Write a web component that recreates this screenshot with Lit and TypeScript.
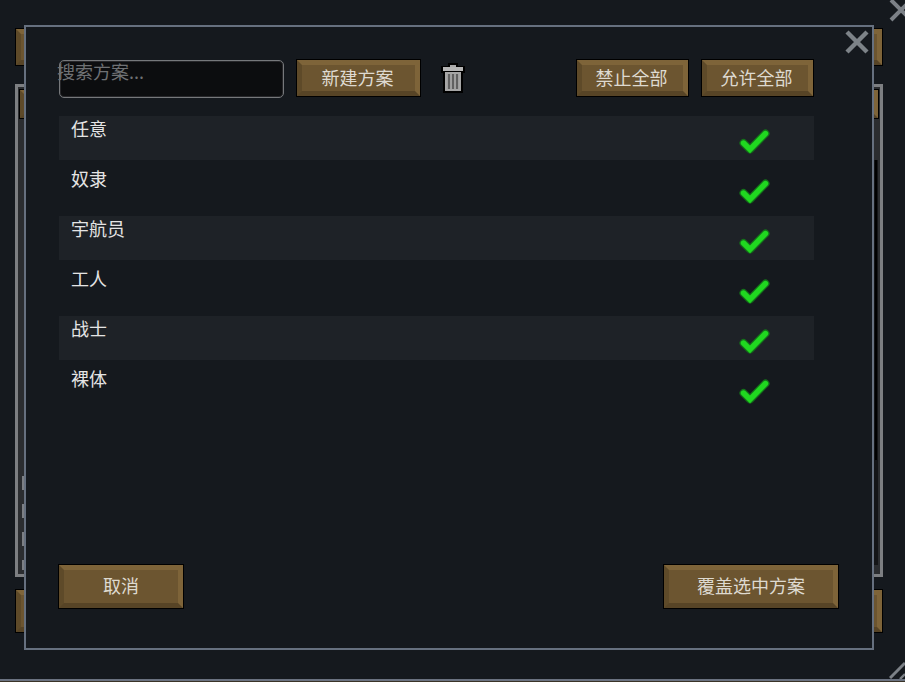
import { LitElement, html, css, svg } from "lit";
import { customElement } from "lit/decorators.js";

const check = svg`<svg class="check" viewBox="0 0 32 28" width="32" height="28"><path d="M4.5 16 L11 22.5 L26.5 6.5" fill="none" stroke="#14701a" stroke-width="8" stroke-linecap="round" stroke-linejoin="round"/><path d="M4.5 16 L11 22.5 L26.5 6.5" fill="none" stroke="#20d820" stroke-width="5.4" stroke-linecap="round" stroke-linejoin="miter"/></svg>`;

const rows = ["任意", "奴隶", "宇航员", "工人", "战士", "裸体"];

@customElement("app-root")
export class AppRoot extends LitElement {
  static styles = css`
    :host { display: block; width: 905px; height: 682px; position: relative; overflow: hidden; background: #15191e;
      font-family: "Noto Sans CJK SC", "Liberation Sans", sans-serif; color: #e6e6e6; font-size: 18px; }
    * { box-sizing: border-box; }
    .desk { height: 682px; display: flex; flex-direction: column; padding: 28px 22px 0 15px; }
    .deskbar { display: flex; justify-content: space-between; height: 38px; flex: none; }
    .stub { width: 60px; height: 38px; }
    .win { flex: none; height: 493px; margin-top: 18px; border: 3px solid #7d7f82; background: #2b2d30; padding: 2px 1px 0; display: flex; justify-content: space-between; }
    .col { display: flex; flex-direction: column; }
    .win .stub { height: 30px; }
    .ticks { display: flex; flex-direction: column; gap: 14px; margin: auto 0 4px 3px; width: 3px; }
    .ticks i { display: block; height: 14px; background: #7c7f84; }
    .ticks i:last-child { height: 10px; }
    .col.right { align-items: flex-end; }
    .track { flex: 1; width: 4px; margin: 41px 1px 9px 0; background: #141517; display: flex; flex-direction: column; }
    .track i { display: block; flex: none; height: 300px; margin: 0 1px; background: #000; }
    .deskbar.low { margin-top: 12px; height: 44px; }
    .deskbar.low .stub { height: 44px; }
    .line { flex: none; height: 3px; margin: 46px -22px 0 -15px; background: #6a7280; border-bottom: 1px solid #3a3428; }
    .btn { display: flex; align-items: center; justify-content: center; border: 1px solid #000; position: relative; color: #dedad0; font-size: 18px; background: #6c5530; padding: 0 2px 2px 0; }
    .btn::before { content: ""; position: absolute; inset: 0; border-style: solid; border-width: 5px; border-color: #7e6439 #7e6439 #574426 #5e4a29; pointer-events: none; }
    .btn span { position: relative; }
    .bgx { position: absolute; top: -3px; right: -9px; }
    .grip { position: absolute; right: 0; bottom: 3px; }
    .modal { position: absolute; left: 24px; top: 25px; width: 850px; height: 625px; border: 2px solid #66707f; background: #15191e; padding: 32px 58px 39px 33px; display: flex; flex-direction: column; }
    .close { position: absolute; top: 2px; right: 2px; }
    .toolbar { display: flex; align-items: flex-start; height: 38px; flex: none; }
    .search { width: 225px; height: 38px; margin-top: 1px; border: 1px solid #76787b; border-radius: 5px; box-shadow: inset 0 0 0 1px rgba(118,120,123,.25); background: #0c0d0f; color: #6f7174; line-height: 20px; margin-right: 12px; font-size: 18px; text-indent: -3px; white-space: nowrap; padding: 0; }
    .new { width: 125px; height: 38px; }
    .trash { margin: 4px 0 0 20px; }
    .spacer { flex: 1; }
    .act { width: 113px; height: 38px; }
    .act + .act { margin-left: 12px; }
    .list { display: flex; flex-direction: column; gap: 6px; margin-top: 19px; flex: 1; }
    .row { height: 44px; display: flex; justify-content: space-between; padding: 0 43px 0 12px; line-height: 24px; color: #e4e4e4; }
    .row:nth-child(odd) { background: #1e2227; }
    .row .check { margin-top: 11px; }
    .bottom { display: flex; justify-content: space-between; flex: none; margin-left: -1px; margin-right: -25px; }
    .bottom .btn { padding: 0 0 3px 0; }
    .cancel { width: 126px; height: 45px; }
    .over { width: 176px; height: 45px; }
  `;

  render() {
    return html`
      <div class="desk">
        <div class="deskbar"><div class="btn stub"></div><div class="btn stub"></div></div>
        <div class="win">
          <div class="col">
            <div class="btn stub"></div>
            <div class="ticks"><i></i><i></i><i></i><i></i></div>
          </div>
          <div class="col right">
            <div class="btn stub"></div>
            <div class="track"><i></i></div>
          </div>
        </div>
        <div class="deskbar low"><div class="btn stub"></div><div class="btn stub"></div></div>
        <div class="line"></div>
      </div>
      <svg class="bgx" width="26" height="26" viewBox="0 0 26 26"><path d="M3 3 L23 23 M23 3 L3 23" stroke="#7c8187" stroke-width="4"/></svg>
      <svg class="grip" width="16" height="20" viewBox="0 0 16 20"><path d="M1 19 L16 4" stroke="#7c8187" stroke-width="3"/><path d="M11 20 L16 15" stroke="#7c8187" stroke-width="2.4"/></svg>
      <div class="modal">
        <svg class="close" width="26" height="26" viewBox="0 0 26 26"><path d="M3 3 L23 23 M23 3 L3 23" stroke="#7d8388" stroke-width="4.4"/></svg>
        <div class="toolbar">
          <div class="search">搜索方案...</div>
          <div class="btn new"><span>新建方案</span></div>
          <svg class="trash" width="24" height="30" viewBox="0 0 24 30">
            <path d="M7 0h10v3h7v7h-2v20H2V10H0V3h7z" fill="#000"/>
            <rect x="9" y="2" width="6" height="2" fill="#a8a8a8"/>
            <rect x="2" y="4" width="20" height="4" fill="#b5b5b5"/>
            <rect x="4" y="9" width="16" height="19" fill="#a6a6a6"/>
            <path d="M8 11v15M12 11v15M16 11v15" stroke="#606060" stroke-width="2.2"/>
          </svg>
          <div class="spacer"></div>
          <div class="btn act"><span>禁止全部</span></div>
          <div class="btn act"><span>允许全部</span></div>
        </div>
        <div class="list">
          ${rows.map((r) => html`<div class="row"><span>${r}</span>${check}</div>`)}
        </div>
        <div class="bottom">
          <div class="btn cancel"><span>取消</span></div>
          <div class="btn over"><span>覆盖选中方案</span></div>
        </div>
      </div>
    `;
  }
}
